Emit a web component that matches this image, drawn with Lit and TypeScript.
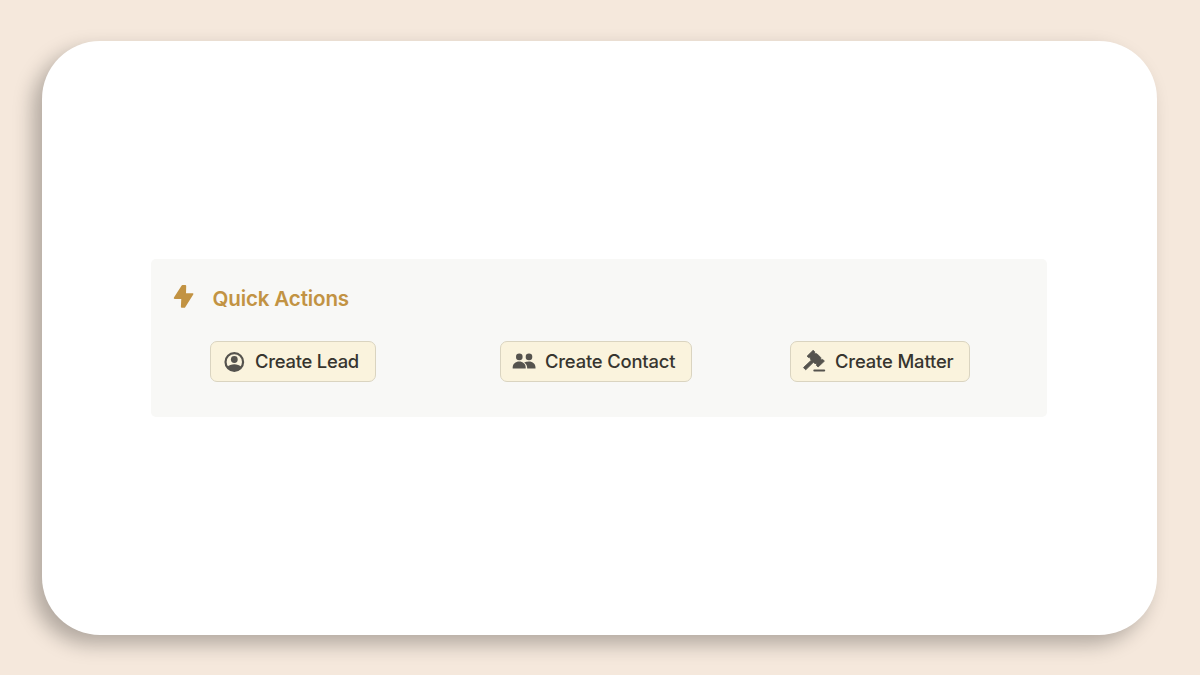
import { LitElement, html, css, svg } from "lit";
import { customElement } from "lit/decorators.js";

const icons = {
  lead: svg`
    <circle cx="12.300" cy="12" r="8.800" fill="none" stroke="currentColor" stroke-width="2.200"/>
    <circle cx="12.300" cy="9.500" r="3.400"/>
    <path d="M5.200 16.900C7 15.100 9.500 14.200 12.300 14.200s5.300.9 7.100 2.700C17.700 19.600 15.200 20.900 12.300 20.900s-5.400-1.300-7.100-4Z"/>`,
  contact: svg`
    <circle cx="7.300" cy="6.900" r="3.300"/>
    <circle cx="17" cy="6.900" r="3.300"/>
    <path d="M.7 18.500v-.9C.7 13.700 3.500 11.400 7.200 11.400s6.500 2.300 6.500 6.200v.9Z"/>
    <path d="M12.200 12.400c1.400-.7 3-1 4.800-1 3.700 0 6.500 2.300 6.500 6.200v.9h-8.300c.1-2.700-.9-4.700-3-6.100Z"/>`,
  matter: svg`
    <path stroke="currentColor" stroke-width=".9" stroke-linejoin="round"
      d="M11.200.3l1.600 1.600-.4 1.600 2.700.4 3.600 3.600.3 2.600 1.700-.6 1.700 1.600-6.300 5.900-1.700-1.700.6-1.500-2.600-.5-1-1-7.700 7.500-2.200-2.200 7.800-7.400-.9-1.200-.4-2-1.500.5L5.100 6.200Z"/>
    <rect x="11.300" y="19.500" width="11.900" height="2.100" rx="1"/>`,
};

const actions = [
  { label: "Create Lead", icon: icons.lead, cls: "lead" },
  { label: "Create Contact", icon: icons.contact, cls: "contact" },
  { label: "Create Matter", icon: icons.matter, cls: "matter" },
];

@customElement("app-root")
export class AppRoot extends LitElement {
  static styles = css`
    :host {
      display: block;
      box-sizing: border-box;
      height: 675px;
      padding: 41px 42.600px 40px 41.600px;
      background: #f5e8dc;
      font-family: Inter, sans-serif;
      overflow: hidden;
    }
    .card {
      box-sizing: border-box;
      height: 594px;
      padding: 218px 110.400px 0 109.400px;
      border-radius: 58px;
      background: #fff;
      box-shadow: -9px 9px 20px rgba(0, 0, 0, 0.28);
    }
    .panel {
      box-sizing: border-box;
      height: 158px;
      border-radius: 5px;
      background: #f8f8f6;
      padding: 23px 0 0 20px;
    }
    .heading {
      display: flex;
      align-items: center;
      gap: 17.500px;
      height: 30px;
      color: #c29343;
    }
    .bolt {
      width: 24px;
      height: 26px;
      margin-top: -2px;
      fill: currentColor;
    }
    h2 {
      margin: 3px 0 0;
      font-size: 20.600px;
      line-height: 30px;
      font-weight: 600;
      letter-spacing: -0.16px;
      white-space: nowrap;
    }
    .actions {
      display: grid;
      grid-template-columns: repeat(3, 290px);
      justify-items: start;
      padding: 29px 0 0 39px;
    }
    button {
      box-sizing: border-box;
      display: flex;
      align-items: center;
      gap: 9px;
      height: 41px;
      padding: 0 0 0 11px;
      border: 1px solid #dad4c0;
      border-radius: 7px;
      background: #faf3dd;
      color: #37352f;
      font: 500 18.400px/39px Inter, sans-serif;
      letter-spacing: -0.18px;
      white-space: nowrap;
    }
    .lead { width: 166px; letter-spacing: -0.24px; }
    .contact { width: 192px; }
    .matter { width: 180px; letter-spacing: -0.14px; }
    .icon {
      width: 24px;
      height: 24px;
      flex: none;
      color: #55534e;
      fill: currentColor;
    }
  `;

  render() {
    return html`
      <main class="card">
        <section class="panel">
          <header class="heading">
            <svg class="bolt" viewBox="0 0 24 26">
              <path stroke="currentColor" stroke-width="1.800" stroke-linejoin="round"
                d="M11.400 3 3.700 15.100h7.500l-.4 8.800h2.500L21.500 11.100h-7.400l.2-8.100Z"/>
            </svg>
            <h2>Quick Actions</h2>
          </header>
          <div class="actions">
            ${actions.map(
              (a) => html`
                <button class=${a.cls} type="button">
                  <svg class="icon" viewBox="0 0 24 24">${a.icon}</svg>
                  <span>${a.label}</span>
                </button>`
            )}
          </div>
        </section>
      </main>`;
  }
}
